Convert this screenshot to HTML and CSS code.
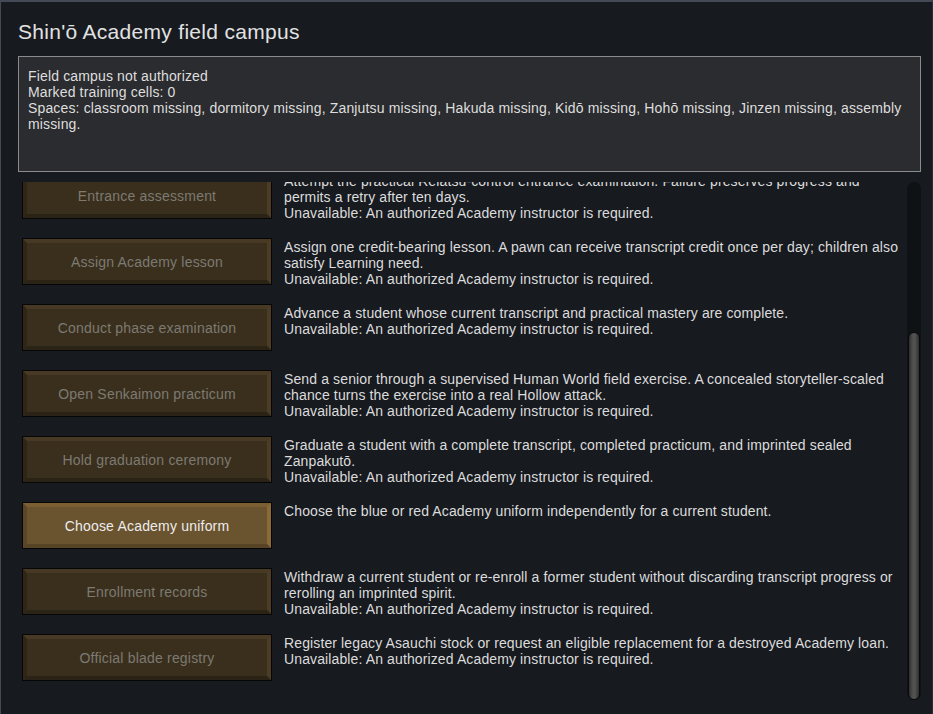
FILE: index.html
```html
<!DOCTYPE html>
<html lang="en">
<head>
<meta charset="utf-8">
<title>Shin'ō Academy field campus</title>
<link rel="stylesheet" href="styles.css">
</head>
<body>
<div class="window">
  <h1 class="title">Shin'ō Academy field campus</h1>
  <div class="status">
    <div>Field campus not authorized</div>
    <div>Marked training cells: 0</div>
    <div>Spaces: classroom missing, dormitory missing, Zanjutsu missing, Hakuda missing, Kidō missing, Hohō missing, Jinzen missing, assembly missing.</div>
  </div>
  <div class="scroll-area">
    <div class="viewport">
      <div class="list">
        <div class="row">
          <div class="btn disabled"><span>Entrance assessment</span></div>
          <div class="desc">Attempt the practical Reiatsu-control entrance examination. Failure preserves progress and permits a retry after ten days.<br>Unavailable: An authorized Academy instructor is required.</div>
        </div>
        <div class="row">
          <div class="btn disabled"><span>Assign Academy lesson</span></div>
          <div class="desc">Assign one credit-bearing lesson. A pawn can receive transcript credit once per day; children also satisfy Learning need.<br>Unavailable: An authorized Academy instructor is required.</div>
        </div>
        <div class="row">
          <div class="btn disabled"><span>Conduct phase examination</span></div>
          <div class="desc">Advance a student whose current transcript and practical mastery are complete.<br>Unavailable: An authorized Academy instructor is required.</div>
        </div>
        <div class="row">
          <div class="btn disabled"><span>Open Senkaimon practicum</span></div>
          <div class="desc">Send a senior through a supervised Human World field exercise. A concealed storyteller-scaled chance turns the exercise into a real Hollow attack.<br>Unavailable: An authorized Academy instructor is required.</div>
        </div>
        <div class="row">
          <div class="btn disabled"><span>Hold graduation ceremony</span></div>
          <div class="desc">Graduate a student with a complete transcript, completed practicum, and imprinted sealed Zanpakutō.<br>Unavailable: An authorized Academy instructor is required.</div>
        </div>
        <div class="row">
          <div class="btn active"><span>Choose Academy uniform</span></div>
          <div class="desc">Choose the blue or red Academy uniform independently for a current student.</div>
        </div>
        <div class="row">
          <div class="btn disabled"><span>Enrollment records</span></div>
          <div class="desc">Withdraw a current student or re-enroll a former student without discarding transcript progress or rerolling an imprinted spirit.<br>Unavailable: An authorized Academy instructor is required.</div>
        </div>
        <div class="row">
          <div class="btn disabled"><span>Official blade registry</span></div>
          <div class="desc">Register legacy Asauchi stock or request an eligible replacement for a destroyed Academy loan.<br>Unavailable: An authorized Academy instructor is required.</div>
        </div>
      </div>
    </div>
    <div class="scrollbar">
      <div class="thumb"></div>
    </div>
  </div>
</div>
</body>
</html>
```

FILE: styles.css
```css
* { box-sizing: border-box; }
html, body {
  margin: 0;
  padding: 0;
  background: #15191e;
}
body {
  font-family: "Liberation Sans", Arial, sans-serif;
  color: #dcdcdc;
}
.window {
  width: 933px;
  height: 714px;
  background: #171a1f;
  border-top: 2px solid #434a55;
  border-left: 1px solid #434a55;
  border-right: 1px solid #2a2f37;
  padding: 18px 11px 0 17px;
  overflow: hidden;
}
.title {
  margin: 0 0 12px 0;
  font-size: 21px;
  line-height: 24px;
  letter-spacing: 0.3px;
  font-weight: normal;
  color: #e2e2e2;
}
.status {
  height: 116px;
  background: #2b2c2f;
  border: 1px solid #8a8a8a;
  padding: 11px 9px;
  font-size: 14px;
  line-height: 16px;
  letter-spacing: 0.15px;
  color: #dedede;
}
.scroll-area {
  margin-top: 10px;
  height: 518px;
  display: flex;
  gap: 1px;
}
.viewport {
  flex: 1;
  overflow: hidden;
}
.list {
  margin-top: -10px;
  display: flex;
  flex-direction: column;
  gap: 19px;
  padding-left: 4px;
}
.row {
  display: flex;
  gap: 12px;
  align-items: flex-start;
  height: 47px;
}
.btn {
  flex: 0 0 250px;
  height: 47px;
  border: 1px solid #060606;
  display: flex;
  align-items: center;
  justify-content: center;
  font-size: 14px;
  letter-spacing: 0.2px;
  position: relative;
}
.btn::before {
  content: "";
  position: absolute;
  inset: 0;
  border-style: solid;
  border-width: 4px;
}
.btn.disabled {
  background: #3a2f1d;
  color: #7c7a72;
}
.btn.disabled::before {
  border-color: #473923 #4b3c23 #2b2315 #2f2617;
}
.btn.active {
  background: #6a532f;
  color: #ececec;
}
.btn.active::before {
  border-color: #7b5e31 #8a6a37 #574326 #5b4627;
}
.btn span { position: relative; }
.desc {
  flex: 1;
  font-size: 14px;
  line-height: 16px;
  letter-spacing: 0.12px;
  color: #dcdcdc;
  padding-top: 1px;
}
.scrollbar {
  flex: 0 0 14px;
  height: 518px;
  background: #0f1215;
  border-radius: 7px;
  display: flex;
  flex-direction: column;
  justify-content: flex-end;
  padding: 0 1px;
}
.thumb {
  height: 368px;
  border-radius: 6px;
  border: 1px solid #0a0a0a;
  background: linear-gradient(to right, #2e2e2e 0%, #4a4a4a 30%, #555555 50%, #4a4a4a 70%, #2e2e2e 100%);
}
```
